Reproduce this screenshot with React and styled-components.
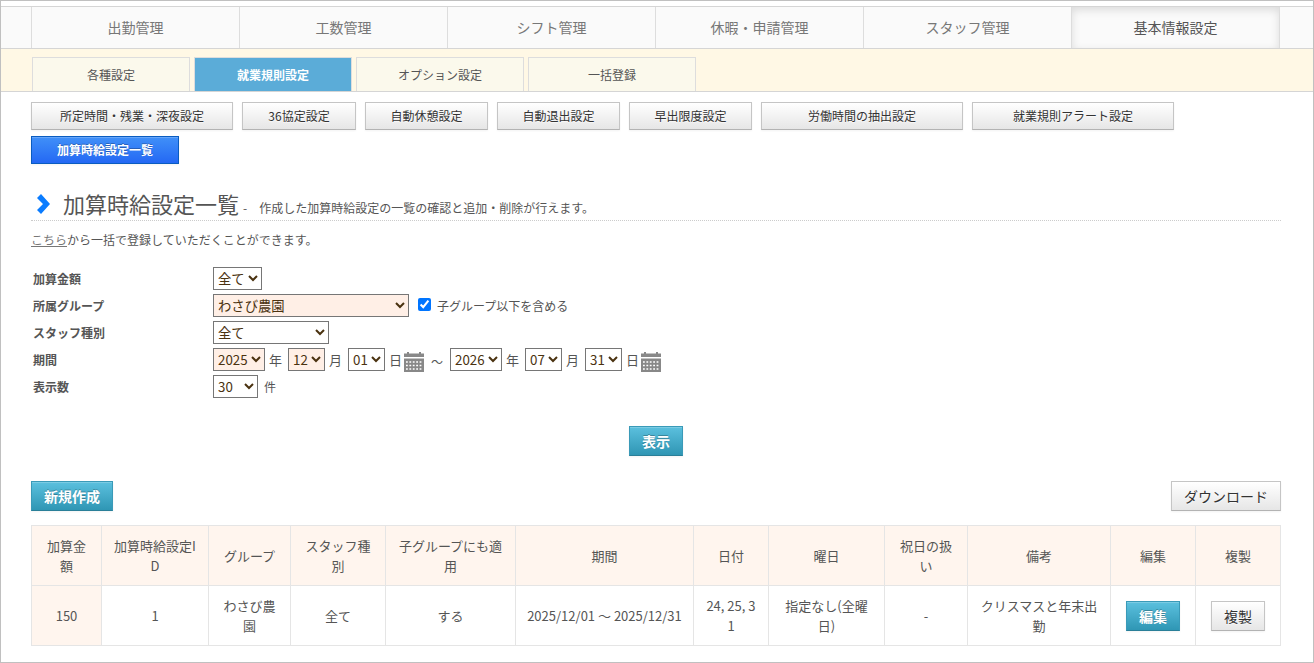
import React from 'react';
import styled, { createGlobalStyle, css } from 'styled-components';

const GlobalStyle = createGlobalStyle`
  * {
    box-sizing: border-box;
  }

  body {
    margin: 0;
    background: #fff;
    color: #555;
    font-family: 'Noto Sans CJK JP', sans-serif;
    font-size: 12px;
    line-height: 20px;
  }
`;

const Page = styled.div`
  min-height: 100vh;
  padding-top: 5px;
  border: 1px solid #c0c0c0;
`;

const MainNav = styled.nav`
  display: flex;
  height: 43px;
  padding: 0 30px;
  border-top: 1px solid #d5d5d5;
  border-bottom: 1px solid #d5d5d5;
  background: #fafafa;
`;

const MainNavItem = styled.a`
  flex: 0 1 208px;
  border-left: 1px solid #ddd;
  color: #777;
  font-size: 14px;
  line-height: 40px;
  text-align: center;
  text-decoration: none;

  &:last-child {
    flex-basis: 209px;
    border-right: 1px solid #ddd;
  }

  ${({ $active }) => $active && css`
    color: #555;
    box-shadow: inset 0 3px 8px rgba(0, 0, 0, 0.125);
  `}
`;

const SubNav = styled.nav`
  display: flex;
  align-items: flex-end;
  gap: 4px;
  height: 43px;
  padding: 0 31px;
  border-bottom: 1px solid #d5d5d5;
  background: #fff8e5;
`;

const SubNavItem = styled.a`
  width: ${({ $wide }) => ($wide ? '168px' : '158px')};
  height: 34px;
  border: 1px solid #ddd;
  border-bottom: 0;
  background: #fbf9ec;
  color: #555;
  line-height: 33px;
  text-align: center;
  text-decoration: none;

  ${({ $active }) => $active && css`
    background: #5bacd8;
    color: #fff;
    font-weight: bold;
  `}
`;

const Content = styled.main`
  padding: 10px 32px 16px 30px;
`;

const MenuList = styled.div`
  display: flex;
  flex-wrap: wrap;
  gap: 6px 9px;
`;

const tones = {
  plain: css`
    border-color: #c5c5c5 #c5c5c5 #b3b3b3;
    background: linear-gradient(#fff, #e6e6e6);
    color: #333;
    text-shadow: 0 1px 1px rgba(255, 255, 255, 0.75);
  `,
  blue: css`
    border-color: #0a5cc0;
    background: linear-gradient(#4090f8, #2468f4);
    color: #fff;
    font-weight: bold;
    text-shadow: 0 -1px 0 rgba(0, 0, 0, 0.25);
  `,
  teal: css`
    border-color: #3a9ab8 #3a9ab8 #2a7f98;
    background: linear-gradient(#5bc0de, #2f96b4);
    color: #fff;
    font-weight: bold;
    text-shadow: 0 -1px 0 rgba(0, 0, 0, 0.25);
  `,
};

const Button = styled.button`
  height: 30px;
  padding: 0 12px;
  border: 1px solid;
  font-family: inherit;
  font-size: 14px;
  line-height: 28px;
  white-space: nowrap;
  box-shadow: inset 0 1px 0 rgba(255, 255, 255, 0.2), 0 1px 2px rgba(0, 0, 0, 0.05);
  cursor: pointer;
  ${({ $tone }) => tones[$tone || 'plain']}
`;

const MenuButton = styled(Button)`
  width: ${({ $width }) => $width}px;
  height: 28px;
  font-size: 12px;
  line-height: 26px;
`;

const TitleBar = styled.header`
  display: flex;
  align-items: baseline;
  margin-top: 24px;
  padding: 0 0 1px 5px;
  border-bottom: 1px dotted #ccc;
`;

const TitleIcon = styled.svg`
  align-self: center;
  margin-right: 11px;
`;

const Title = styled.h1`
  margin: 0;
  font-size: 22px;
  font-weight: normal;
  line-height: 31px;
`;

const TitleNote = styled.span`
  padding-left: 4px;
  white-space: pre;
`;

const Lead = styled.p`
  margin: 9px 0 15px;

  a {
    color: #777;
    text-decoration: underline;
  }
`;

const FilterRow = styled.div`
  display: flex;
  align-items: center;
  height: 27px;
`;

const FilterName = styled.label`
  width: 182px;
  padding-left: 2px;
  font-weight: bold;
`;

const FilterFields = styled.div`
  display: flex;
  align-items: center;
`;

const Select = styled.select`
  width: ${({ $width }) => $width}px;
  height: 23px;
  padding: 0;
  border: 1px solid #767676;
  border-radius: 0;
  background: ${({ $filled }) => ($filled ? '#ffefe6' : '#fff')};
  color: #4a3210;
  font-family: inherit;
`;

const Unit = styled.span`
  padding: 0 6px 0 4px;
  font-size: 13px;

  &:last-of-type {
    padding-right: 2px;
  }
`;

const DateGroup = styled.div`
  display: flex;
  align-items: center;
`;

const Checkbox = styled.input`
  width: 13px;
  height: 13px;
  margin: 0 6px 2px 9px;
`;

const CalendarButton = styled.button`
  display: flex;
  margin-top: 4px;
  padding: 0;
  border: 0;
  background: none;
`;

const Tilde = styled.span`
  padding: 4px 7px 0;
`;

const Note = styled.span`
  padding-left: 6px;
`;

const SubmitRow = styled.div`
  display: flex;
  justify-content: center;
  margin: 26px 0 25px;
`;

const ActionRow = styled.div`
  display: flex;
  justify-content: space-between;
  margin-bottom: 14px;
`;

const Table = styled.table`
  width: 100%;
  border-collapse: collapse;
  table-layout: fixed;
  font-size: 13px;
  text-align: center;
`;

const Cell = styled.td`
  height: 60px;
  padding: 0 10px;
  border: 1px solid #e5e5e5;
  background: ${({ $filled }) => ($filled ? '#fff5ee' : '#fff')};
  font-weight: normal;
  word-break: break-all;
`;

const mainNav = ['出勤管理', '工数管理', 'シフト管理', '休暇・申請管理', 'スタッフ管理', '基本情報設定'];

const subNav = [
  { label: '各種設定' },
  { label: '就業規則設定', active: true },
  { label: 'オプション設定', wide: true },
  { label: '一括登録', wide: true },
];

const menus = [
  { label: '所定時間・残業・深夜設定', width: 202 },
  { label: '36協定設定', width: 114 },
  { label: '自動休憩設定', width: 123 },
  { label: '自動退出設定', width: 123 },
  { label: '早出限度設定', width: 123 },
  { label: '労働時間の抽出設定', width: 202 },
  { label: '就業規則アラート設定', width: 202 },
  { label: '加算時給設定一覧', width: 148, tone: 'blue' },
];

const columns = [
  { label: '加算金額', width: 70 },
  { label: '加算時給設定ID', width: 107 },
  { label: 'グループ', width: 82 },
  { label: 'スタッフ種別', width: 95 },
  { label: '子グループにも適用', width: 130 },
  { label: '期間', width: 178 },
  { label: '日付', width: 75 },
  { label: '曜日', width: 116 },
  { label: '祝日の扱い', width: 83 },
  { label: '備考', width: 143 },
  { label: '編集', width: 85 },
  { label: '複製', width: 85 },
];

const tableWidth = columns.reduce((sum, column) => sum + column.width, 0);

const rows = [
  ['150', '1', 'わさび農園', '全て', 'する', '2025/12/01 ～ 2025/12/31', '24, 25, 31', '指定なし(全曜日)', '-', 'クリスマスと年末出勤'],
];

function CalendarIcon() {
  return (
    <svg width="20" height="20" viewBox="0 0 20 20" fill="#888" aria-hidden="true">
      <path d="M0 1.5h3V0h2v1.5h10V0h2v1.5h3V5H0z" />
      <path d="M0 6.5h20V20H0z" />
      <path
        d="M2 10h16M2 13.5h16M2 17h16"
        stroke="#fff"
        strokeDasharray="1.8 1.6"
        strokeWidth="1.6"
        fill="none"
      />
    </svg>
  );
}

function DateFields({ name, year, month, day, filled }) {
  return (
    <DateGroup>
      <Select id={`${name}-year`} aria-label="年" $width={52} $filled={filled}>
        <option>{year}</option>
      </Select>
      <Unit>年</Unit>
      <Select aria-label="月" $width={37} $filled={filled}>
        <option>{month}</option>
      </Select>
      <Unit>月</Unit>
      <Select aria-label="日" $width={37}>
        <option>{day}</option>
      </Select>
      <Unit>日</Unit>
      <CalendarButton type="button" aria-label="カレンダー">
        <CalendarIcon />
      </CalendarButton>
    </DateGroup>
  );
}

function FilterForm() {
  return (
    <form onSubmit={(e) => e.preventDefault()}>
      <FilterRow>
        <FilterName htmlFor="amount">加算金額</FilterName>
        <Select id="amount" $width={49}>
          <option>全て</option>
        </Select>
      </FilterRow>
      <FilterRow>
        <FilterName htmlFor="group">所属グループ</FilterName>
        <FilterFields>
          <Select id="group" $width={196} $filled>
            <option>わさび農園</option>
          </Select>
          <Checkbox type="checkbox" id="children" defaultChecked />
          <label htmlFor="children">子グループ以下を含める</label>
        </FilterFields>
      </FilterRow>
      <FilterRow>
        <FilterName htmlFor="staff">スタッフ種別</FilterName>
        <Select id="staff" $width={116}>
          <option>全て</option>
        </Select>
      </FilterRow>
      <FilterRow>
        <FilterName htmlFor="from-year">期間</FilterName>
        <FilterFields>
          <DateFields name="from" year="2025" month="12" day="01" filled />
          <Tilde>～</Tilde>
          <DateFields name="to" year="2026" month="07" day="31" />
        </FilterFields>
      </FilterRow>
      <FilterRow>
        <FilterName htmlFor="limit">表示数</FilterName>
        <FilterFields>
          <Select id="limit" $width={45}>
            <option>30</option>
          </Select>
          <Note>件</Note>
        </FilterFields>
      </FilterRow>
      <SubmitRow>
        <Button type="submit" $tone="teal">表示</Button>
      </SubmitRow>
    </form>
  );
}

function WageTable() {
  return (
    <Table>
      <colgroup>
        {columns.map(({ label, width }) => (
          <col key={label} style={{ width: `${(width / tableWidth) * 100}%` }} />
        ))}
      </colgroup>
      <thead>
        <tr>
          {columns.map(({ label }) => (
            <Cell as="th" key={label} $filled>{label}</Cell>
          ))}
        </tr>
      </thead>
      <tbody>
        {rows.map((row) => (
          <tr key={row[1]}>
            {row.map((value, i) => (
              <Cell key={columns[i].label} $filled={i === 0}>{value}</Cell>
            ))}
            <Cell><Button type="button" $tone="teal">編集</Button></Cell>
            <Cell><Button type="button">複製</Button></Cell>
          </tr>
        ))}
      </tbody>
    </Table>
  );
}

function App() {
  return (
    <Page>
      <GlobalStyle />
      <MainNav>
        {mainNav.map((label) => (
          <MainNavItem href="#" key={label} $active={label === '基本情報設定'}>{label}</MainNavItem>
        ))}
      </MainNav>
      <SubNav>
        {subNav.map(({ label, active, wide }) => (
          <SubNavItem href="#" key={label} $active={active} $wide={wide}>{label}</SubNavItem>
        ))}
      </SubNav>
      <Content>
        <MenuList>
          {menus.map(({ label, width, tone }) => (
            <MenuButton type="button" key={label} $width={width} $tone={tone}>{label}</MenuButton>
          ))}
        </MenuList>
        <TitleBar>
          <TitleIcon width="16" height="20" viewBox="0 0 16 20" aria-hidden="true">
            <path d="M1 4l4-4 9 10-9 10-4-4 6-6z" fill="#0a7cff" />
          </TitleIcon>
          <Title>加算時給設定一覧</Title>
          <TitleNote>-　作成した加算時給設定の一覧の確認と追加・削除が行えます。</TitleNote>
        </TitleBar>
        <Lead>
          <a href="#">こちら</a>から一括で登録していただくことができます。
        </Lead>
        <FilterForm />
        <ActionRow>
          <Button type="button" $tone="teal">新規作成</Button>
          <Button type="button">ダウンロード</Button>
        </ActionRow>
        <WageTable />
      </Content>
    </Page>
  );
}

export default App;
